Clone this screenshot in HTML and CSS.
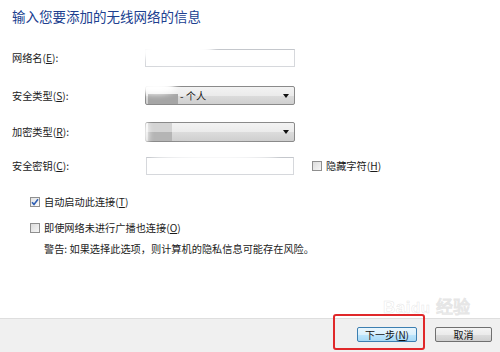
FILE: index.html
```html
<!DOCTYPE html>
<html lang="zh-CN">
<head>
<meta charset="UTF-8">
<meta name="viewport" content="width=device-width, initial-scale=1.0">
<title>手动连接到无线网络</title>
<link rel="stylesheet" href="styles.css">
</head>
<body>
<div class="dialog">
  <h1 class="title">输入您要添加的无线网络的信息</h1>

  <div class="fields">
    <div class="row row-name">
      <label class="lbl">网络名(<u>E</u>):</label>
      <div class="textbox"></div>
    </div>
    <div class="row row-sec">
      <label class="lbl">安全类型(<u>S</u>):</label>
      <div class="combo">
        <span class="mask mask-dark"></span>
        <span class="combo-text">- 个人</span>
        <span class="arrow"></span>
      </div>
    </div>
    <div class="row row-enc">
      <label class="lbl">加密类型(<u>R</u>):</label>
      <div class="combo">
        <span class="mask mask-stack"><i></i><i></i></span>
        <span class="arrow"></span>
      </div>
    </div>
    <div class="row row-key">
      <label class="lbl">安全密钥(<u>C</u>):</label>
      <div class="textbox textbox-key"></div>
      <span class="check check-side"><span class="box"></span>隐藏字符(<u>H</u>)</span>
    </div>
  </div>

  <div class="options">
    <div class="opt">
      <span class="box checked">
        <svg width="8" height="8" viewBox="0 0 8 8"><path d="M1 4.2 L3 6.4 L7 1.2" fill="none" stroke="#2f5fb4" stroke-width="1.6"/></svg>
      </span>
      自动启动此连接(<u>T</u>)
    </div>
    <div class="opt opt-second">
      <span class="box"></span>
      即使网络未进行广播也连接(<u>O</u>)
    </div>
    <p class="warning">警告: 如果选择此选项，则计算机的隐私信息可能存在风险。</p>
  </div>

  <!-- blurred patches over the private fields -->
  <div class="blur b1"></div>
  <div class="blur b2"></div>
  <div class="blur b3"></div>
  <div class="blur b4"></div>
</div>

<div class="footer">
  <span class="watermark">Bai<span class="paw">du</span> 经验</span>
  <button class="btn btn-next">下一步(<u>N</u>)</button>
  <button class="btn">取消</button>
  <span class="highlight"></span>
</div>
</body>
</html>
```

FILE: styles.css
```css
body {
  margin: 0;
  background: #fff;
  font-family: "Noto Sans CJK SC", "Liberation Sans", sans-serif;
  font-size: 10.2px;
  color: #1b1b1b;
}

.dialog {
  position: relative;
  height: 318px;
  padding: 0 0 0 12px;
  box-sizing: border-box;
  overflow: hidden;
}

.title {
  margin: 0;
  padding-top: 8px;
  font-size: 13.5px;
  line-height: 16px;
  font-weight: normal;
  color: #20408f;
}

.fields {
  margin-top: 25px;
}

.row {
  display: flex;
  align-items: center;
  height: 18px;
}
.row-name { margin-bottom: 19px; }
.row-sec { margin-bottom: 17px; height: 19px; }
.row-enc { margin-bottom: 15px; height: 20px; }

.lbl {
  width: 133px;
  line-height: 14px;
}

u { text-decoration: underline; text-underline-offset: 1px; }

.textbox {
  width: 150px;
  height: 18px;
  box-sizing: border-box;
  border: 1px solid #d6d8dc;
  border-top-color: #c4c7cc;
  background: #fff;
}
.textbox-key {
  width: 148px;
  margin-left: 1px;
}

.combo {
  position: relative;
  width: 150px;
  height: 100%;
  box-sizing: border-box;
  border: 1px solid #8a8a8a;
  border-radius: 2px;
  background: linear-gradient(#f3f3f3, #ebebeb 50%, #dcdcdc 51%, #cfcfcf);
  display: flex;
  align-items: center;
}

.mask {
  display: block;
  margin-left: 2px;
}
.mask-dark {
  width: 30px;
  height: 10px;
  margin-top: 6px;
  background: #a5a5a5;
}
.mask-stack {
  width: 34px;
  height: 100%;
  display: flex;
  flex-direction: column;
}
.mask-stack i {
  flex: 1;
  width: 24px;
  background: #d4d4d4;
}
.mask-stack i + i { background: #b5b5b5; }

.combo-text {
  margin-left: 2px;
  line-height: 12px;
}

.arrow {
  position: absolute;
  right: 5px;
  top: 7px;
  border-left: 3px solid transparent;
  border-right: 3px solid transparent;
  border-top: 4px solid #111;
}

.box {
  display: inline-flex;
  align-items: center;
  justify-content: center;
  width: 10px;
  height: 10px;
  box-sizing: border-box;
  border: 1px solid #8f8f8f;
  background: linear-gradient(135deg, #dcdcdc, #f6f6f6);
  margin-right: 4px;
}
.box.checked {
  background: linear-gradient(135deg, #e4e4e4, #fbfbfb);
}

.check {
  display: flex;
  align-items: center;
  line-height: 12px;
}
.check-side {
  margin-left: 18px;
}

.options {
  margin-top: 20px;
  padding-left: 18px;
}
.opt {
  display: flex;
  align-items: center;
  height: 13px;
  line-height: 13px;
}
.opt-second {
  margin-top: 13px;
}
.warning {
  margin: 8px 0 0;
  padding-left: 14px;
  line-height: 13px;
}

.blur {
  position: absolute;
  background: #fff;
  border-radius: 50%;
  filter: blur(3px);
}
.b1 { left: 138px; top: 40px; width: 76px; height: 22px; }
.b2 { left: 136px; top: 80px; width: 40px; height: 14px; }
.b3 { left: 132px; top: 116px; width: 16px; height: 34px; }
.b4 { left: 150px; top: 146px; width: 128px; height: 15px; }

.footer {
  position: relative;
  height: 34px;
  box-sizing: border-box;
  border-top: 1px solid #dedede;
  background: #f0f0f0;
  display: flex;
  align-items: center;
  justify-content: flex-end;
  padding: 0 8px 2px 0;
  gap: 18px;
}

.btn {
  height: 15px;
  padding: 0;
  font-family: inherit;
  font-size: 10px;
  line-height: 13px;
  color: #111;
  border: 1px solid #707070;
  border-radius: 2px;
  background: linear-gradient(#f4f4f4, #ebebeb 50%, #dddddd 51%, #cfcfcf);
  width: 57px;
}
.btn-next {
  width: 60px;
  border-color: #3c7fb1;
  background: linear-gradient(#eaf6fd, #d9f0fc 50%, #bee6fd 51%, #a7d9f5);
}

.highlight {
  position: absolute;
  left: 333px;
  top: -5px;
  width: 92px;
  height: 36px;
  box-sizing: border-box;
  border: 2px solid #e0282a;
  border-radius: 3px;
}

.watermark {
  position: absolute;
  left: 383px;
  top: -26px;
  font-family: "Liberation Sans", sans-serif;
  font-size: 17px;
  font-weight: bold;
  color: rgba(255, 255, 255, 0.4);
  -webkit-text-stroke: 0.5px rgba(190, 190, 190, 0.4);
  letter-spacing: 0.5px;
}
.paw {
  font-size: 15px;
}
```
